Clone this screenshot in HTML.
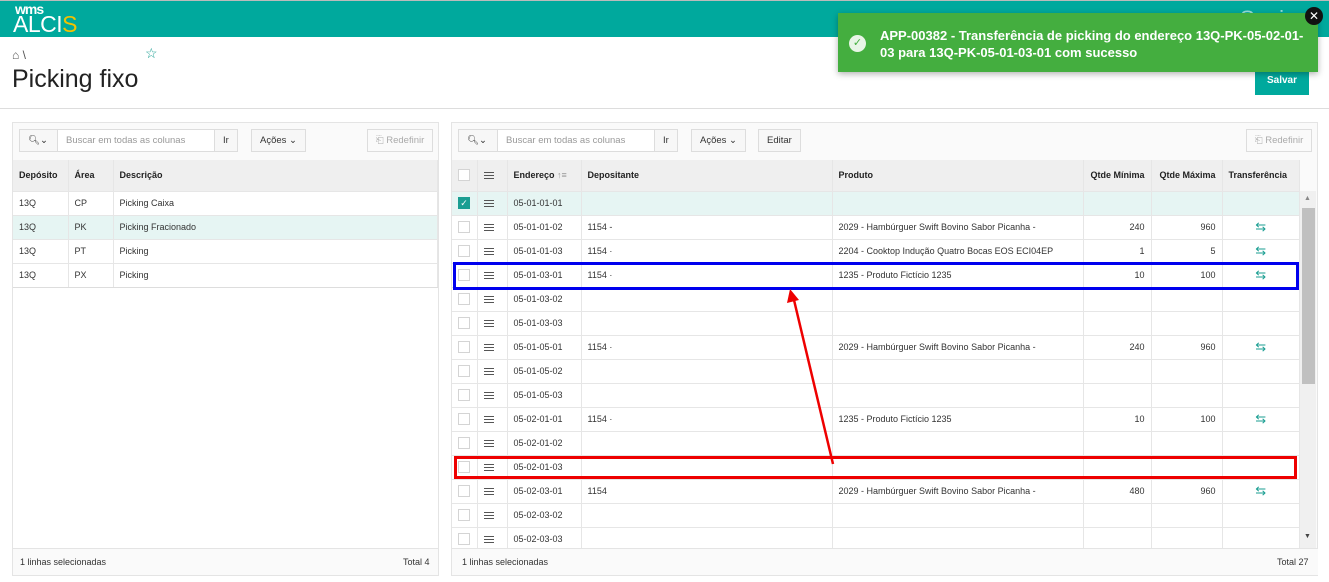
<!DOCTYPE html>
<html><head><meta charset="utf-8"><style>
*{box-sizing:border-box;margin:0;padding:0}
body{width:1329px;height:582px;overflow:hidden;background:#fff;font-family:"Liberation Sans",sans-serif;font-size:9.5px;color:#333;position:relative}
.top{position:absolute;left:0;top:0;width:1329px;height:37px;background:#00a99d;border-top:1px solid #bbb}
.abs{position:absolute}
.panel{position:absolute;background:#fafafa;border:1px solid #e4e4e4}
.btn{position:absolute;height:23px;border:1px solid #ddd;background:#f7f7f7;font-size:9.5px;line-height:21px;padding:0 8px;color:#333}
table{border-collapse:collapse;position:absolute;background:#fff;table-layout:fixed}
td,th{border-right:1px solid #e6e6e6;border-bottom:1px solid #e6e6e6;height:24px;padding:0 6px;white-space:nowrap;overflow:hidden;text-align:left;font-size:9px}
th{background:#efefef;height:31px;font-weight:bold;color:#222}
.r{text-align:right}
.cb{display:inline-block;width:12px;height:12px;border:1px solid #d4d4d4;background:#fff;vertical-align:middle}
.hm{display:inline-block;width:10px;height:7px;border-top:1px solid #555;border-bottom:1px solid #555;position:relative;vertical-align:middle}
.hm:after{content:"";position:absolute;left:0;right:0;top:2px;border-top:1px solid #555}
.tr{color:#1a9e92;font-size:13px;text-align:center}
.sel td{background:#e6f5f3}
</style></head><body>
<div class="top">
<div class="abs" style="left:15px;top:0px;color:#fff;font-size:14px;font-weight:bold;letter-spacing:-1px">wms</div>
<div class="abs" style="left:13px;top:10px;color:#fff;font-size:23px;letter-spacing:-0.5px">ALCI<span style="color:#f2c200">S</span></div>
<div class="abs" style="left:1240px;top:5px;color:#fff;opacity:.6;font-size:22px">Senior</div>
</div>
<div class="abs" style="left:12px;top:48px;font-size:12px;color:#555">⌂ \</div>
<div class="abs" style="left:145px;top:45px;font-size:14px;color:#1a9e92">☆</div>
<div class="abs" style="left:12px;top:65px;font-size:25px;color:#222">Picking fixo</div>
<div class="abs" style="left:1255px;top:66px;width:54px;height:29px;background:#00a99d;color:#fff;font-weight:bold;font-size:10px;text-align:center;line-height:29px">Salvar</div>
<div class="abs" style="left:0;top:108px;width:1329px;border-top:1px solid #ddd"></div>

<div class="panel" style="left:12px;top:122px;width:427px;height:454px"></div>
<div class="btn" style="left:19px;top:129px;width:40px">🔍︎⌄</div>
<div class="btn" style="left:57px;top:129px;width:158px;background:#fff;color:#999">Buscar em todas as colunas</div>
<div class="btn" style="left:214px;top:129px;width:24px">Ir</div>
<div class="btn" style="left:251px;top:129px">Ações ⌄</div>
<div class="btn" style="left:367px;top:129px;color:#aaa;background:#fafafa">⎗ Redefinir</div>
<table style="left:13px;top:160px;width:425px">
<colgroup><col style="width:55px"><col style="width:45px"><col></colgroup>
<tr><th>Depósito</th><th>Área</th><th>Descrição</th></tr>
<tr><td>13Q</td><td>CP</td><td>Picking Caixa</td></tr>
<tr class="sel"><td>13Q</td><td>PK</td><td>Picking Fracionado</td></tr>
<tr><td>13Q</td><td>PT</td><td>Picking</td></tr>
<tr><td>13Q</td><td>PX</td><td>Picking</td></tr>
</table>
<div class="abs" style="left:13px;top:287px;width:425px;height:261px;background:#fff;border-top:1px solid #ddd"></div>
<div class="abs" style="left:13px;top:548px;width:425px;border-top:1px solid #e4e4e4"></div>
<div class="abs" style="left:20px;top:557px;font-size:9px">1 linhas selecionadas</div>
<div class="abs" style="left:403px;top:557px;font-size:9px">Total 4</div>

<div class="panel" style="left:451px;top:122px;width:867px;height:454px"></div>
<div class="btn" style="left:458px;top:129px;width:40px">🔍︎⌄</div>
<div class="btn" style="left:497px;top:129px;width:158px;background:#fff;color:#999">Buscar em todas as colunas</div>
<div class="btn" style="left:654px;top:129px;width:24px">Ir</div>
<div class="btn" style="left:691px;top:129px">Ações ⌄</div>
<div class="btn" style="left:758px;top:129px">Editar</div>
<div class="btn" style="left:1246px;top:129px;color:#aaa;background:#fafafa">⎗ Redefinir</div>
<table style="left:452px;top:160px;width:848px">
<colgroup><col style="width:25px"><col style="width:30px"><col style="width:74px"><col style="width:251px"><col style="width:251px"><col style="width:68px"><col style="width:71px"><col></colgroup>
<tr><th><span class="cb"></span></th><th><span class="hm"></span></th><th>Endereço <span style="color:#999;font-weight:normal">↑≡</span></th><th>Depositante</th><th>Produto</th><th class="r">Qtde Mínima</th><th class="r">Qtde Máxima</th><th>Transferência</th></tr>
<tr class="sel"><td><span class="cb" style="background:#1a9e92;border-color:#1a9e92;color:#fff;font-size:9px;line-height:10px;text-align:center">✓</span></td><td><span class="hm"></span></td><td>05-01-01-01</td><td></td><td></td><td></td><td></td><td></td></tr>
<tr><td><span class="cb"></span></td><td><span class="hm"></span></td><td>05-01-01-02</td><td>1154 -</td><td>2029 - Hambúrguer Swift Bovino Sabor Picanha -</td><td class="r">240</td><td class="r">960</td><td class="tr">⇆</td></tr>
<tr><td><span class="cb"></span></td><td><span class="hm"></span></td><td>05-01-01-03</td><td>1154 ·</td><td>2204 - Cooktop Indução Quatro Bocas EOS ECI04EP</td><td class="r">1</td><td class="r">5</td><td class="tr">⇆</td></tr>
<tr><td><span class="cb"></span></td><td><span class="hm"></span></td><td>05-01-03-01</td><td>1154 ·</td><td>1235 - Produto Fictício 1235</td><td class="r">10</td><td class="r">100</td><td class="tr">⇆</td></tr>
<tr><td><span class="cb"></span></td><td><span class="hm"></span></td><td>05-01-03-02</td><td></td><td></td><td></td><td></td><td></td></tr>
<tr><td><span class="cb"></span></td><td><span class="hm"></span></td><td>05-01-03-03</td><td></td><td></td><td></td><td></td><td></td></tr>
<tr><td><span class="cb"></span></td><td><span class="hm"></span></td><td>05-01-05-01</td><td>1154 ·</td><td>2029 - Hambúrguer Swift Bovino Sabor Picanha -</td><td class="r">240</td><td class="r">960</td><td class="tr">⇆</td></tr>
<tr><td><span class="cb"></span></td><td><span class="hm"></span></td><td>05-01-05-02</td><td></td><td></td><td></td><td></td><td></td></tr>
<tr><td><span class="cb"></span></td><td><span class="hm"></span></td><td>05-01-05-03</td><td></td><td></td><td></td><td></td><td></td></tr>
<tr><td><span class="cb"></span></td><td><span class="hm"></span></td><td>05-02-01-01</td><td>1154 ·</td><td>1235 - Produto Fictício 1235</td><td class="r">10</td><td class="r">100</td><td class="tr">⇆</td></tr>
<tr><td><span class="cb"></span></td><td><span class="hm"></span></td><td>05-02-01-02</td><td></td><td></td><td></td><td></td><td></td></tr>
<tr><td><span class="cb"></span></td><td><span class="hm"></span></td><td>05-02-01-03</td><td></td><td></td><td></td><td></td><td></td></tr>
<tr><td><span class="cb"></span></td><td><span class="hm"></span></td><td>05-02-03-01</td><td>1154</td><td>2029 - Hambúrguer Swift Bovino Sabor Picanha -</td><td class="r">480</td><td class="r">960</td><td class="tr">⇆</td></tr>
<tr><td><span class="cb"></span></td><td><span class="hm"></span></td><td>05-02-03-02</td><td></td><td></td><td></td><td></td><td></td></tr>
<tr><td><span class="cb"></span></td><td><span class="hm"></span></td><td>05-02-03-03</td><td></td><td></td><td></td><td></td><td></td></tr>
</table>
<div class="abs" style="left:1300px;top:191px;width:16px;height:357px;background:#f0f0f0"></div>
<div class="abs" style="left:1302px;top:208px;width:13px;height:176px;background:#c0c0c0"></div>
<div class="abs" style="left:1304px;top:195px;font-size:7px;color:#888">▲</div>
<div class="abs" style="left:1304px;top:533px;font-size:7px;color:#444">▼</div>
<div class="abs" style="left:452px;top:548px;width:866px;height:27px;background:#fafafa;border-top:1px solid #e4e4e4"></div>
<div class="abs" style="left:462px;top:557px;font-size:9px">1 linhas selecionadas</div>
<div class="abs" style="left:1277px;top:557px;font-size:9px">Total 27</div>

<div class="abs" style="left:453px;top:262px;width:846px;height:28px;border:3px solid #0000ee"></div>
<div class="abs" style="left:454px;top:456px;width:843px;height:23px;border:3px solid #ee0000"></div>
<svg class="abs" style="left:0;top:0" width="1329" height="582"><line x1="833" y1="464" x2="794" y2="300" stroke="#e00" stroke-width="2.5"/><polygon points="790,289 787,303 799,300" fill="#e00"/></svg>

<div class="abs" style="left:838px;top:13px;width:480px;height:59px;background:#44ae3f;box-shadow:0 2px 6px rgba(0,0,0,.3)"></div>
<div class="abs" style="left:849px;top:35px;width:17px;height:17px;border-radius:50%;background:#e8f5e6;color:#44ae3f;font-size:11px;text-align:center;line-height:17px">✓</div>
<div class="abs" style="left:880px;top:27px;width:425px;color:#fff;font-weight:bold;font-size:13px;line-height:17px">APP-00382 - Transferência de picking do endereço 13Q-PK-05-02-01-03 para 13Q-PK-05-01-03-01 com sucesso</div>
<div class="abs" style="left:1305px;top:7px;width:18px;height:18px;border-radius:50%;background:#111;color:#fff;font-size:12px;text-align:center;line-height:18px">✕</div>
</body></html>
